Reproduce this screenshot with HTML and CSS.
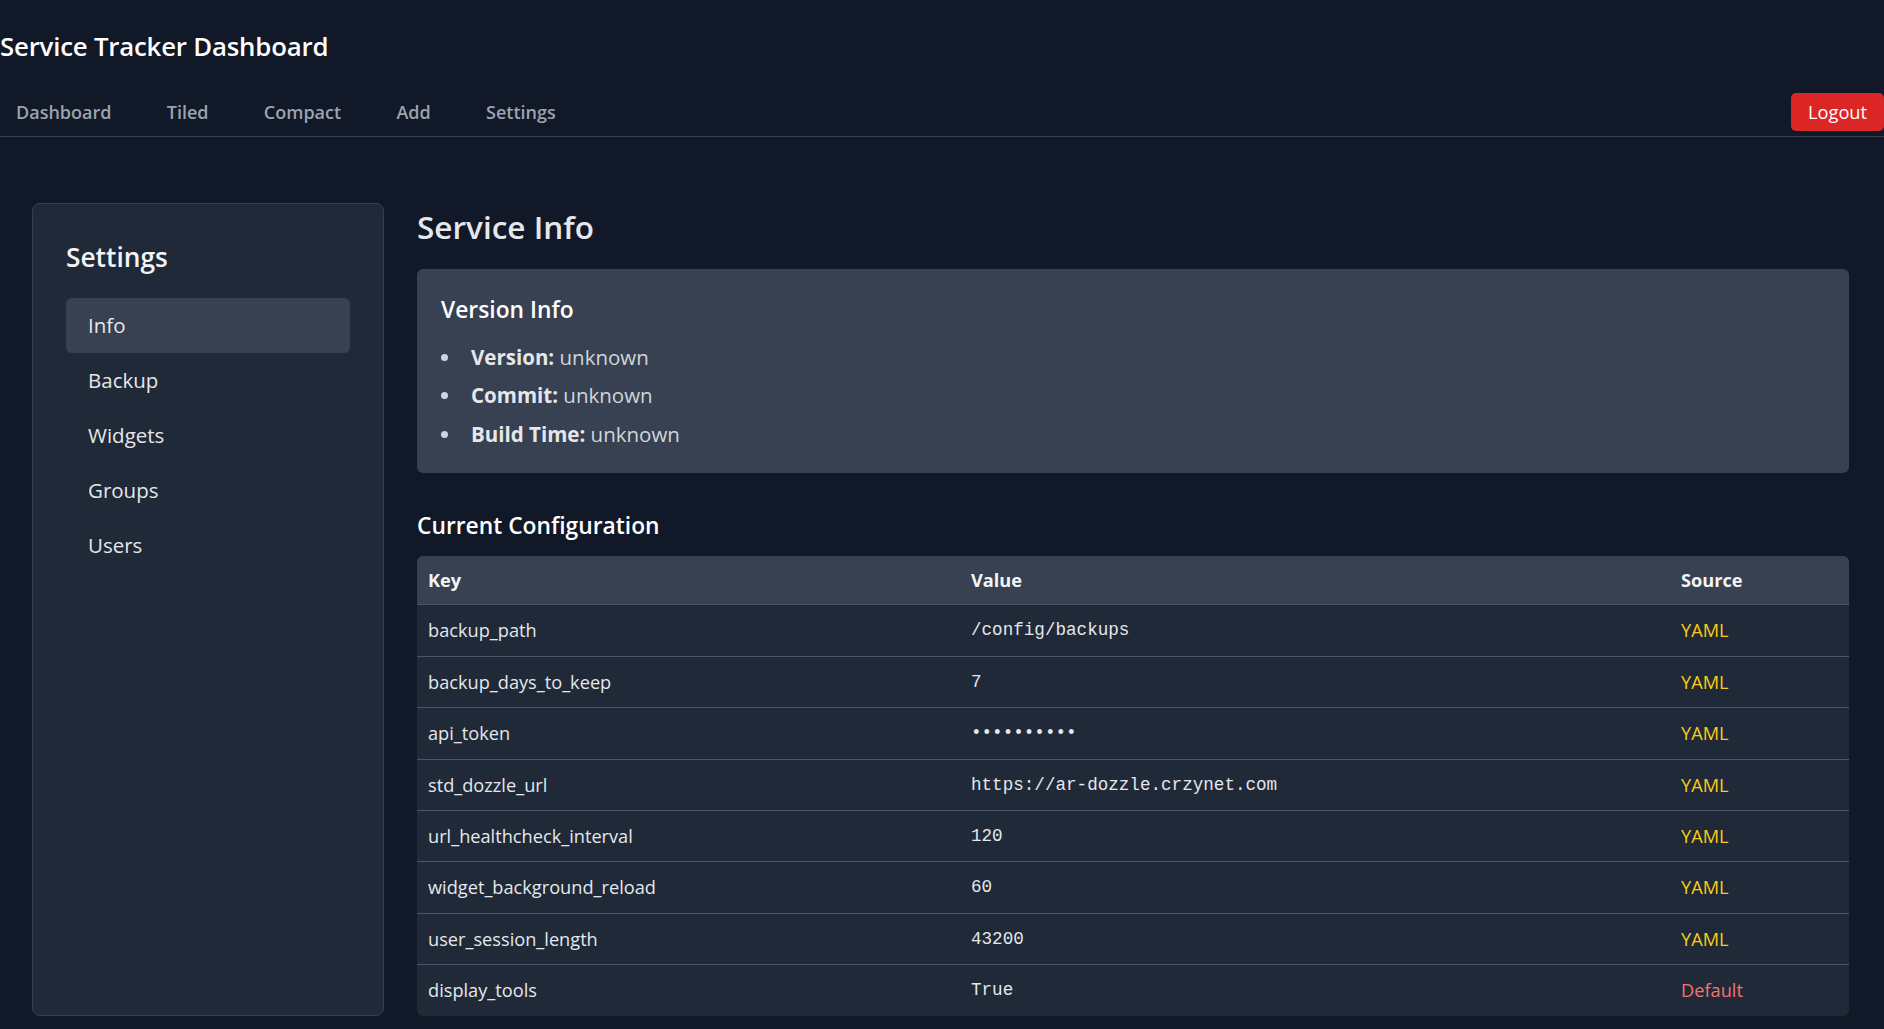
FILE: index.html
```html
<!DOCTYPE html>
<html lang="en">
<head>
<meta charset="utf-8">
<title>Service Tracker Dashboard</title>
<link rel="stylesheet" href="styles.css">
</head>
<body>
<header class="site-header">
  <h1 class="site-title">Service Tracker Dashboard</h1>
  <nav class="topnav">
    <div class="nav-links">
      <a href="#" class="nav-link">Dashboard</a>
      <a href="#" class="nav-link">Tiled</a>
      <a href="#" class="nav-link">Compact</a>
      <a href="#" class="nav-link">Add</a>
      <a href="#" class="nav-link">Settings</a>
    </div>
    <button class="logout">Logout</button>
  </nav>
</header>
<div class="layout">
  <aside class="sidebar">
    <h2 class="sidebar-title">Settings</h2>
    <ul class="side-menu">
      <li class="side-item active">Info</li>
      <li class="side-item">Backup</li>
      <li class="side-item">Widgets</li>
      <li class="side-item">Groups</li>
      <li class="side-item">Users</li>
    </ul>
  </aside>
  <main class="content">
    <h2 class="page-title">Service Info</h2>
    <section class="version-box">
      <h3 class="section-title">Version Info</h3>
      <ul class="info-list">
        <li><strong>Version:</strong> unknown</li>
        <li><strong>Commit:</strong> unknown</li>
        <li><strong>Build Time:</strong> unknown</li>
      </ul>
    </section>
    <h3 class="section-title config-title">Current Configuration</h3>
    <div class="table-wrap">
      <table class="config-table">
        <thead>
          <tr><th class="col-key">Key</th><th class="col-value">Value</th><th>Source</th></tr>
        </thead>
        <tbody>
          <tr><td>backup_path</td><td class="mono">/config/backups</td><td class="src-yaml">YAML</td></tr>
          <tr><td>backup_days_to_keep</td><td class="mono">7</td><td class="src-yaml">YAML</td></tr>
          <tr><td>api_token</td><td class="mono">••••••••••</td><td class="src-yaml">YAML</td></tr>
          <tr><td>std_dozzle_url</td><td class="mono">https://ar-dozzle.crzynet.com</td><td class="src-yaml">YAML</td></tr>
          <tr><td>url_healthcheck_interval</td><td class="mono">120</td><td class="src-yaml">YAML</td></tr>
          <tr><td>widget_background_reload</td><td class="mono">60</td><td class="src-yaml">YAML</td></tr>
          <tr><td>user_session_length</td><td class="mono">43200</td><td class="src-yaml">YAML</td></tr>
          <tr><td>display_tools</td><td class="mono">True</td><td class="src-default">Default</td></tr>
        </tbody>
      </table>
    </div>
  </main>
</div>
</body>
</html>
```
FILE: styles.css
```css
* { box-sizing: border-box; }
html, body {
  margin: 0;
  padding: 0;
  background: #111827;
  color: #e5e7eb;
  font-family: "Open Sans", "Noto Sans", sans-serif;
  overflow: hidden;
}
.site-header {
  padding-top: 27px;
}
.site-title {
  margin: 0;
  font-size: 25.8px;
  line-height: 38px;
  font-weight: 600;
  color: #ffffff;
  letter-spacing: -0.2px;
}
.topnav {
  margin-top: 23px;
  height: 49px;
  display: flex;
  align-items: center;
  justify-content: space-between;
  border-bottom: 1px solid #374151;
}
.nav-links {
  display: flex;
  gap: 55.3px;
  padding-left: 16px;
}
.nav-link {
  color: #9ca3af;
  text-decoration: none;
  font-size: 18px;
  font-weight: 600;
  line-height: 28.8px;
}
.logout {
  background: #dc2626;
  color: #ffffff;
  border: none;
  border-radius: 5px;
  font-family: inherit;
  font-size: 18.2px;
  line-height: 28px;
  padding: 5px 17px;
  margin-top: 5px;
  align-self: flex-start;
}
.layout {
  display: flex;
  gap: 33px;
  padding: 66px 35px 14px 32px;
}
.sidebar {
  width: 352px;
  flex: none;
  background: #1f2937;
  border: 1px solid #374151;
  border-radius: 8px;
  padding: 34px 33px 20px 33px;
}
.sidebar-title {
  margin: 0 0 22px;
  font-size: 26.3px;
  line-height: 38px;
  font-weight: 600;
  color: #f3f4f6;
}
.side-menu {
  list-style: none;
  margin: 0;
  padding: 0;
}
.side-item {
  padding: 10px 22px;
  line-height: 35px;
  font-size: 20.5px;
  color: #e5e7eb;
  border-radius: 6px;
}
.side-item.active {
  background: #374151;
}
.content {
  flex: 1;
  min-width: 0;
  padding-top: 2px;
}
.page-title {
  margin: 0 0 21px;
  font-size: 31.5px;
  line-height: 43px;
  font-weight: 600;
  color: #e5e7eb;
}
.version-box {
  background: #374151;
  border-radius: 6px;
  padding: 24px;
}
.section-title {
  margin: 0 0 16px;
  font-size: 22.8px;
  line-height: 34px;
  font-weight: 600;
  color: #ffffff;
}
.info-list {
  list-style: none;
  margin: 0;
  padding: 0;
  display: flex;
  flex-direction: column;
  gap: 9.6px;
}
.info-list li {
  position: relative;
  padding-left: 30px;
  font-size: 20.5px;
  line-height: 28.8px;
  color: #d1d5db;
}
.info-list li::before {
  content: "";
  position: absolute;
  left: 0;
  top: 11px;
  width: 7px;
  height: 7px;
  border-radius: 50%;
  background: #d1d5db;
}
.info-list strong {
  font-weight: 700;
  color: #e5e7eb;
}
.config-title {
  margin-top: 36px;
  margin-bottom: 13px;
}
.table-wrap {
  border-radius: 6px;
  overflow: hidden;
  background: #1f2937;
}
.config-table {
  width: 100%;
  border-collapse: collapse;
  font-size: 18.2px;
}
.config-table th {
  background: #374151;
  text-align: left;
  font-weight: 700;
  color: #f3f4f6;
  padding: 10px 11px;
  line-height: 28.8px;
}
.col-key { width: 543px; }
.col-value { width: 710px; }
.config-table td {
  border-top: 1px solid #4b5563;
  padding: 11px 11px 10.6px;
  line-height: 28.8px;
  color: #e5e7eb;
}
.mono {
  font-family: "Liberation Mono", "DejaVu Sans Mono", monospace;
  font-size: 17.6px;
}
.config-table td.src-yaml { color: #facc15; }
.config-table td.src-default { color: #f87171; }
```
